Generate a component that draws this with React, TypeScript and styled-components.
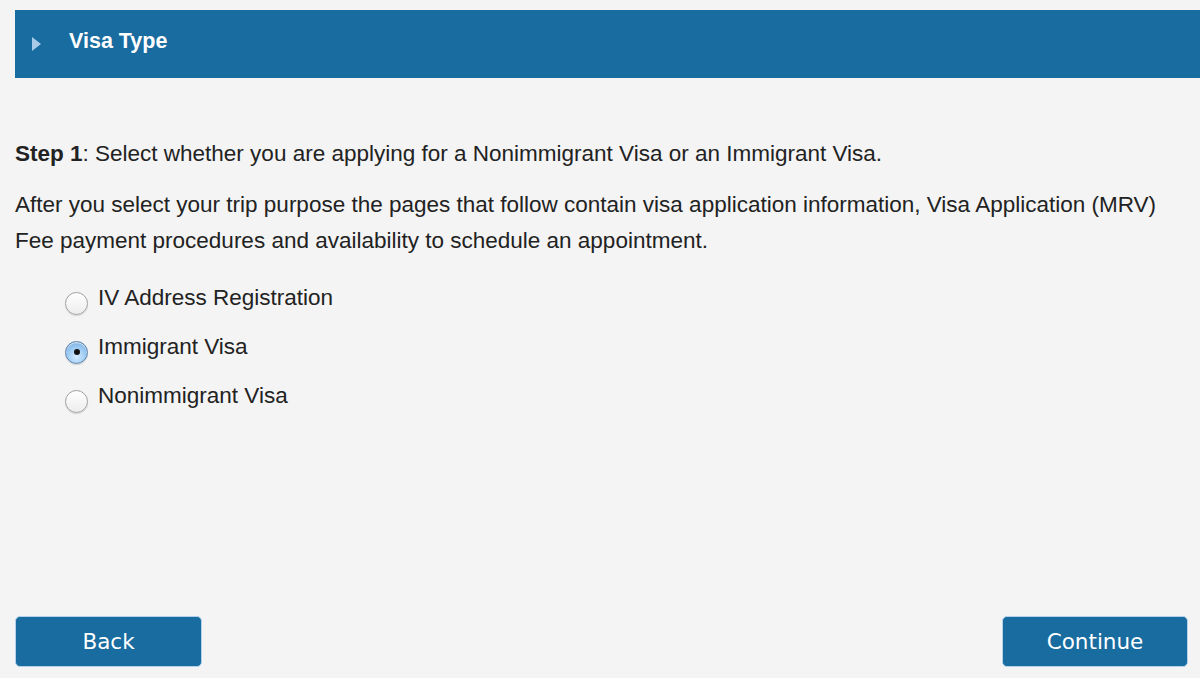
import React, { useState } from "react";
import styled, { createGlobalStyle } from "styled-components";

const Global = createGlobalStyle`
  html, body { margin: 0; padding: 0; background: #f4f4f4; }
  body { font-family: "Liberation Sans", Arial, sans-serif; color: #222; }
`;

const Page = styled.div`
  width: 1200px;
  height: 678px;
  box-sizing: border-box;
  padding: 10px 12px 11px 15px;
  display: flex;
  flex-direction: column;
  background: #f4f4f4;
  overflow: hidden;
`;

const Header = styled.div`
  height: 68px;
  box-sizing: border-box;
  margin-right: -12px;
  background: #186c9f;
  display: flex;
  align-items: center;
  padding: 0 0 5px 17px;
  gap: 28px;
`;

const Arrow = styled.span`
  width: 0;
  height: 0;
  margin-top: 4px;
  border-top: 7.5px solid transparent;
  border-bottom: 7.5px solid transparent;
  border-left: 9px solid #a9cbe8;
`;

const Title = styled.h1`
  margin: 0;
  font-size: 21.5px;
  font-weight: 700;
  color: #fff;
`;

const Body = styled.div`
  flex: 1;
  padding-top: 58px;
  font-size: 22.5px;
  line-height: 36px;
`;

const Para = styled.p`
  margin: 0 0 15px;
`;

const RadioList = styled.div`
  display: flex;
  flex-direction: column;
  gap: 13px;
  padding-left: 50px;
  margin-top: 21px;
`;

const RadioRow = styled.label`
  display: flex;
  align-items: center;
  gap: 10px;
  height: 36px;
  cursor: pointer;
`;

const RadioCircle = styled.span<{ $checked: boolean }>`
  width: 23px;
  height: 23px;
  border-radius: 50%;
  box-sizing: border-box;
  margin-top: 10px;
  border: 1px solid ${(p) => (p.$checked ? "#5d82a9" : "#a0a0a0")};
  background: ${(p) =>
    p.$checked
      ? "radial-gradient(circle at 50% 70%, #d6ecff 0%, #9ccaf3 50%, #6aa3dc 100%)"
      : "linear-gradient(#ffffff, #ededed)"};
  box-shadow: inset 0 1px 1px rgba(255,255,255,0.8), 0 1px 1px rgba(0,0,0,0.12);
  display: flex;
  align-items: center;
  justify-content: center;
  &::after {
    content: "";
    width: 6px;
    height: 6px;
    border-radius: 50%;
    background: #111;
    display: ${(p) => (p.$checked ? "block" : "none")};
  }
`;

const Footer = styled.div`
  display: flex;
  justify-content: space-between;
`;

const Button = styled.button<{ $w: number }>`
  width: ${(p) => p.$w}px;
  height: 51px;
  background: #186c9f;
  color: #fff;
  border: 1px solid #b4d2ee;
  border-radius: 5px;
  font-family: "DejaVu Sans", Verdana, sans-serif;
  font-size: 21.5px;
  cursor: pointer;
`;

const options = ["IV Address Registration", "Immigrant Visa", "Nonimmigrant Visa"];

export default function App() {
  const [sel, setSel] = useState(1);
  return (
    <>
      <Global />
      <Page>
        <Header>
          <Arrow />
          <Title>Visa Type</Title>
        </Header>
        <Body>
          <Para>
            <b>Step 1</b>: Select whether you are applying for a Nonimmigrant Visa or an Immigrant Visa.
          </Para>
          <Para>
            After you select your trip purpose the pages that follow contain visa application information, Visa Application (MRV) Fee payment procedures and availability to schedule an appointment.
          </Para>
          <RadioList>
            {options.map((o, i) => (
              <RadioRow key={o} onClick={() => setSel(i)}>
                <RadioCircle $checked={sel === i} />
                {o}
              </RadioRow>
            ))}
          </RadioList>
        </Body>
        <Footer>
          <Button $w={187}>Back</Button>
          <Button $w={186}>Continue</Button>
        </Footer>
      </Page>
    </>
  );
}
